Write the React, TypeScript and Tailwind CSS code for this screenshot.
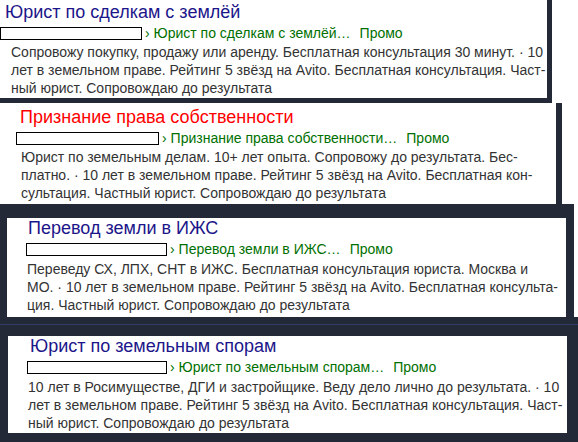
type Ad = {
  title: string;
  red?: boolean;
  crumb: string;
  lines: string[];
};

const ads: Ad[] = [
  {
    title: "Юрист по сделкам с землёй",
    crumb: "Юрист по сделкам с землёй…",
    lines: [
      "Сопровожу покупку, продажу или аренду. Бесплатная консультация 30 минут. · 10",
      "лет в земельном праве. Рейтинг 5 звёзд на Avito. Бесплатная консультация. Част-",
      "ный юрист. Сопровождаю до результата",
    ],
  },
  {
    title: "Признание права собственности",
    red: true,
    crumb: "Признание права собственности…",
    lines: [
      "Юрист по земельным делам. 10+ лет опыта. Сопровожу до результата. Бес-",
      "платно. · 10 лет в земельном праве. Рейтинг 5 звёзд на Avito. Бесплатная кон-",
      "сультация. Частный юрист. Сопровождаю до результата",
    ],
  },
  {
    title: "Перевод земли в ИЖС",
    crumb: "Перевод земли в ИЖС…",
    lines: [
      "Переведу СХ, ЛПХ, СНТ в ИЖС. Бесплатная консультация юриста. Москва и",
      "МО. · 10 лет в земельном праве. Рейтинг 5 звёзд на Avito. Бесплатная консульта-",
      "ция. Частный юрист. Сопровождаю до результата",
    ],
  },
  {
    title: "Юрист по земельным спорам",
    crumb: "Юрист по земельным спорам…",
    lines: [
      "10 лет в Росимуществе, ДГИ и застройщике. Веду дело лично до результата. · 10",
      "лет в земельном праве. Рейтинг 5 звёзд на Avito. Бесплатная консультация. Част-",
      "ный юрист. Сопровождаю до результата",
    ],
  },
];

/** Одно объявление: заголовок, закрашенный адрес + путь, текст. */
function AdCard({
  ad,
  titleCls,
  crumbCls,
  boxCls,
  bodyCls,
}: {
  ad: Ad;
  titleCls: string;
  crumbCls: string;
  boxCls: string;
  bodyCls: string;
}) {
  return (
    <div className="h-full bg-white">
      <div
        className={`whitespace-nowrap text-[18px] ${titleCls} ${
          ad.red ? "text-[#ff0000]" : "text-[#1c168a]"
        }`}
      >
        {ad.title}
      </div>
      <div className={`flex items-center whitespace-nowrap text-[14px] text-[#007000] ${crumbCls}`}>
        <span className={`border border-black bg-white ${boxCls}`} />
        <span className="ml-[3px]">› {ad.crumb}</span>
        <span className="ml-[9px]">Промо</span>
      </div>
      <div className={`text-[14px] text-[#333333] ${bodyCls}`}>
        {ad.lines.map((l, i) => (
          <div key={i} className="whitespace-nowrap">
            {l}
          </div>
        ))}
      </div>
    </div>
  );
}

export default function App() {
  return (
    <div
      className="h-[442px] w-[578px] overflow-hidden bg-white"
      style={{ fontFamily: '"Liberation Sans", Arial, sans-serif' }}
    >
      {/* 1 */}
      <div className="w-[552px] bg-[#232936] pb-[5px] pr-[5px]">
        <div className="h-[98px]">
          <AdCard
            ad={ads[0]}
            titleCls="pl-[5px] pt-[1px] leading-[23px]"
            crumbCls="h-[19px]"
            boxCls="h-[13px] w-[142px]"
            bodyCls="pl-[11px] leading-[18px]"
          />
        </div>
      </div>

      {/* 2 */}
      <div className="w-[562px] bg-[#232936] pr-[6px]">
        <div className="h-[101px]">
          <AdCard
            ad={ads[1]}
            titleCls="pl-[20px] pt-[3px] leading-[22px]"
            crumbCls="h-[20px] pl-[16px]"
            boxCls="h-[13px] w-[143px]"
            bodyCls="pl-[21px] leading-[18px]"
          />
        </div>
      </div>

      {/* 3 */}
      <div className="w-[574px] bg-[#232936] pl-[7px] pr-[8px] pt-[14px]">
        <div className="h-[99px]">
          <AdCard
            ad={ads[2]}
            titleCls="pl-[21px] leading-[21px]"
            crumbCls="h-[21px] pl-[19px]"
            boxCls="h-[13px] w-[141px]"
            bodyCls="pl-[20px] leading-[18px]"
          />
        </div>
      </div>

      {/* 4 */}
      <div className="w-[578px] bg-[#232936] pb-[9px] pl-[8px] pr-[11px]">
        <div className="-ml-[8px] -mr-[11px] pt-[7px]">
          <div className="h-px bg-[#2f3c66]" />
          <div className="h-[11px]" />
        </div>
        <div className="h-[97px]">
          <AdCard
            ad={ads[3]}
            titleCls="pl-[22px] leading-[21px]"
            crumbCls="h-[21px] pl-[19px]"
            boxCls="h-[13px] w-[140px]"
            bodyCls="pl-[20px] leading-[18px]"
          />
        </div>
      </div>
    </div>
  );
}
